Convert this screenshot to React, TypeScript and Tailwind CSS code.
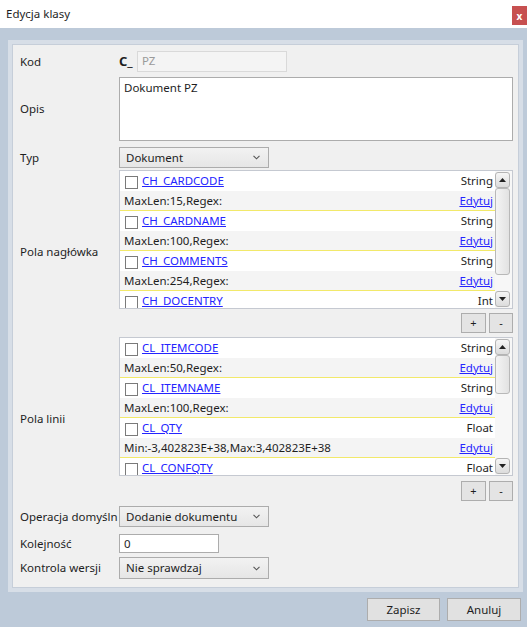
import React from "react";

const Chevron = () => (
  <svg width="7" height="5" viewBox="0 0 7 5" className="shrink-0">
    <polyline points="0.5,0.8 3.5,3.8 6.5,0.8" fill="none" stroke="#555" strokeWidth="1.1" />
  </svg>
);

const Select = ({ value }: { value: string }) => (
  <div className="h-full w-[150px] border border-[#acacac] bg-gradient-to-b from-[#f2f2f2] to-[#e6e6e6] flex items-center justify-between pl-[6px] pr-[8px] text-[#1e1e1e]">
    <span>{value}</span>
    <Chevron />
  </div>
);

const Arrow = ({ up }: { up?: boolean }) => (
  <div className="w-[15px] h-[16px] rounded-[3px] border border-[#b4b4b4] bg-gradient-to-b from-[#f6f6f6] to-[#dcdcdc] flex items-center justify-center">
    <svg width="7" height="4" viewBox="0 0 7 4">
      {up ? <polygon points="0,4 7,4 3.5,0" fill="#222" /> : <polygon points="0,0 7,0 3.5,4" fill="#222" />}
    </svg>
  </div>
);

type Field = { name: string; type: string; desc: string };

const Item = ({ f }: { f: Field }) => (
  <div className="shrink-0">
    <div className="h-[20px] bg-white flex items-center pl-[5px] pr-[2px]">
      <div className="w-[13px] h-[13px] border border-[#7a7a7a] bg-white mt-[2px] shrink-0" />
      <span className="ml-[4px] text-[#2424ff] underline">{f.name}</span>
      <span className="ml-auto">{f.type}</span>
    </div>
    <div className="h-[19px] bg-[#f4f4f4] flex items-center justify-between pl-[4px] pr-[2px]">
      <span>{f.desc}</span>
      <span className="text-[#2424ff] underline">Edytuj</span>
    </div>
    <div className="h-[1px] bg-[#f2e96a]" />
  </div>
);

const List = ({ items, thumb }: { items: Field[]; thumb: number }) => (
  <div className="h-[139px] border border-[#c5c9d1] bg-white flex overflow-hidden">
    <div className="flex-1 flex flex-col overflow-hidden">
      {items.map((f) => (
        <Item key={f.name} f={f} />
      ))}
    </div>
    <div className="w-[17px] bg-[#f7f7f7] flex flex-col items-start pt-[1px] pb-[1px]">
      <Arrow up />
      <div
        className="w-[15px] rounded-[3px] border border-[#b8b8b8] bg-gradient-to-r from-[#f4f4f4] to-[#e2e2e2]"
        style={{ height: thumb }}
      />
      <div className="mt-auto">
        <Arrow />
      </div>
    </div>
  </div>
);

const PlusMinus = () => (
  <div className="flex justify-end gap-[3px] h-full">
    <div className="w-[25px] h-full border border-[#adadad] bg-[#e4e4e4] flex items-center justify-center text-[11px] leading-[12px]">+</div>
    <div className="w-[24px] h-full border border-[#adadad] bg-[#e4e4e4] flex items-center justify-center text-[11px] leading-[12px]">-</div>
  </div>
);

const header: Field[] = [
  { name: "CH_CARDCODE", type: "String", desc: "MaxLen:15,Regex:" },
  { name: "CH_CARDNAME", type: "String", desc: "MaxLen:100,Regex:" },
  { name: "CH_COMMENTS", type: "String", desc: "MaxLen:254,Regex:" },
  { name: "CH_DOCENTRY", type: "Int", desc: "" },
];

const lines: Field[] = [
  { name: "CL_ITEMCODE", type: "String", desc: "MaxLen:50,Regex:" },
  { name: "CL_ITEMNAME", type: "String", desc: "MaxLen:100,Regex:" },
  { name: "CL_QTY", type: "Float", desc: "Min:-3,402823E+38,Max:3,402823E+38" },
  { name: "CL_CONFQTY", type: "Float", desc: "" },
];

export default function App() {
  return (
    <div className="w-[527px] h-[627px] bg-[#bdcad9] flex flex-col font-['Noto_Sans','Open_Sans',sans-serif] text-[11.5px] leading-none text-[#1e1e1e] overflow-hidden">
      {/* title bar */}
      <div className="h-[28px] bg-white flex items-start justify-between shrink-0">
        <span className="pl-[6px] pt-[8px] text-[11.5px]">Edycja klasy</span>
        <div className="mt-[6px] w-[15px] h-[19px] bg-[#c75050] text-white font-bold text-[10px] flex items-center justify-center">x</div>
      </div>

      {/* frame */}
      <div className="mt-[12px] ml-[8px] w-[515px] h-[552px] border-4 border-[#d7dee7] shrink-0">
        <div className="h-full border border-[#c6ced9] bg-[#f0f0f0] pt-[6px] pr-[5px] flex flex-col">
          {/* Kod */}
          <div className="h-[21px] flex items-center">
            <span className="w-[106px] pl-[7px] shrink-0">Kod</span>
            <span className="w-[18px] font-bold text-[13px]">C_</span>
            <div className="w-[150px] h-full border border-[#d9d9d9] bg-[#f4f4f4] text-[#9a9a9a] pl-[4px] pt-[3px]">PZ</div>
          </div>
          {/* Opis */}
          <div className="mt-[5px] h-[64px] flex items-center">
            <span className="w-[106px] pl-[7px] shrink-0">Opis</span>
            <div className="flex-1 h-full border border-[#acacac] bg-white pl-[4px] pt-[4px]">Dokument PZ</div>
          </div>
          {/* Typ */}
          <div className="mt-[6px] h-[21px] flex items-center">
            <span className="w-[106px] pl-[7px] shrink-0">Typ</span>
            <Select value="Dokument" />
          </div>
          {/* Pola nagłówka */}
          <div className="mt-[2px] flex items-center">
            <span className="w-[106px] pl-[7px] shrink-0">Pola nagłówka</span>
            <div className="flex-1 flex flex-col">
              <List items={header} thumb={87} />
              <div className="mt-[4px] h-[20px]">
                <PlusMinus />
              </div>
            </div>
          </div>
          {/* Pola linii */}
          <div className="mt-[4px] flex items-center">
            <span className="w-[106px] pl-[7px] shrink-0">Pola linii</span>
            <div className="flex-1 flex flex-col">
              <List items={lines} thumb={39} />
              <div className="mt-[5px] h-[20px]">
                <PlusMinus />
              </div>
            </div>
          </div>
          {/* Operacja */}
          <div className="mt-[5px] h-[21px] flex items-center">
            <span className="w-[106px] pl-[7px] shrink-0 whitespace-nowrap">Operacja domyśln</span>
            <Select value="Dodanie dokumentu" />
          </div>
          {/* Kolejność */}
          <div className="mt-[7px] h-[19px] flex items-center">
            <span className="w-[106px] pl-[7px] shrink-0">Kolejność</span>
            <div className="w-[100px] h-full border border-[#acacac] bg-white pl-[4px] flex items-center">0</div>
          </div>
          {/* Kontrola wersji */}
          <div className="mt-[4px] h-[22px] flex items-center">
            <span className="w-[106px] pl-[7px] shrink-0">Kontrola wersji</span>
            <Select value="Nie sprawdzaj" />
          </div>
        </div>
      </div>

      {/* buttons */}
      <div className="mt-[6px] pr-[6px] flex justify-end gap-[7px]">
        <div className="w-[73px] h-[23px] border border-[#adadad] bg-[#e1e1e1] flex items-center justify-center">Zapisz</div>
        <div className="w-[74px] h-[23px] border border-[#adadad] bg-[#e1e1e1] flex items-center justify-center">Anuluj</div>
      </div>
    </div>
  );
}
